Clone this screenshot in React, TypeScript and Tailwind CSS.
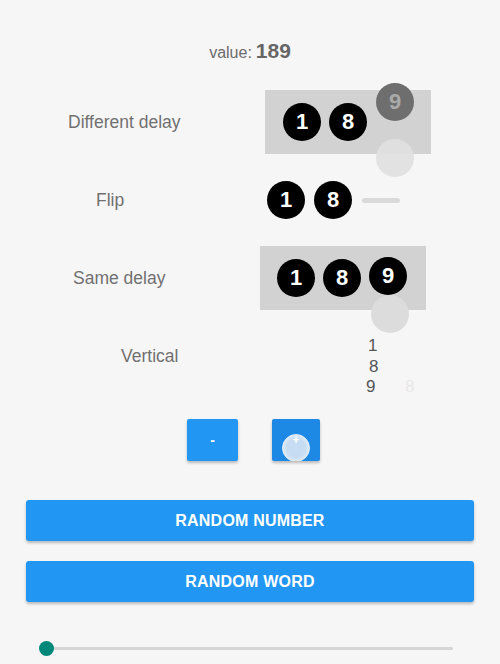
import React from "react";

const font = { fontFamily: '"Liberation Sans", Arial, sans-serif' };

function Ball({ d, className = "", textClass = "text-white" }: { d: string; className?: string; textClass?: string }) {
  return (
    <div className={`w-[38px] h-[38px] rounded-full flex items-center justify-center shrink-0 ${className}`}>
      <span className={`text-[22px] font-bold leading-none ${textClass}`} style={font}>{d}</span>
    </div>
  );
}

export default function App() {
  return (
    <div className="w-[500px] h-[664px] bg-[#f7f6f7] overflow-hidden flex flex-col" style={font}>
      <div className="h-[90px] flex-none flex items-start justify-center pt-[35px] text-[#6b6b6b]">
        <div className="flex items-baseline">
          <span className="text-[16px]">value: </span>
          <span className="text-[21px] font-bold ml-[4px] text-[#666]">189</span>
        </div>
      </div>

      {/* Different delay */}
      <div className="flex items-center h-[64px] flex-none">
        <span className="ml-[68px] text-[17.5px] text-[#707070] w-[197px]">Different delay</span>
        <div className="relative w-[166px] h-[64px] bg-[#d2d2d2] flex items-center pl-[18px] gap-[8px]">
          <Ball d="1" className="bg-black" />
          <Ball d="8" className="bg-black" />
          <div className="absolute left-[111px] top-[-7px]">
            <Ball d="9" className="bg-[#6e6e6e]" textClass="text-[#a9a9a9]" />
          </div>
          <div className="absolute left-[111px] top-[49px] w-[38px] h-[38px] rounded-full bg-[#e0e0e0] opacity-90" />
        </div>
      </div>

      {/* Flip */}
      <div className="flex items-center h-[38px] mt-[27px] flex-none">
        <span className="ml-[96px] text-[17.5px] text-[#707070] w-[171px]">Flip</span>
        <div className="flex items-center gap-[9px]">
          <Ball d="1" className="bg-black" />
          <Ball d="8" className="bg-black" />
          <div className="w-[38px] h-[5px] rounded-full bg-[#dadada] ml-[1px]" />
        </div>
      </div>

      {/* Same delay */}
      <div className="flex items-center h-[64px] mt-[27px] flex-none">
        <span className="ml-[73px] text-[17.5px] text-[#707070] w-[187px]">Same delay</span>
        <div className="relative w-[166px] h-[64px] bg-[#d2d2d2] flex items-center pl-[17px] gap-[8px]">
          <Ball d="1" className="bg-black" />
          <Ball d="8" className="bg-black" />
          <div className="relative top-[-2px]">
            <Ball d="9" className="bg-black" />
          </div>
          <div className="absolute left-[111px] top-[49px] w-[38px] h-[38px] rounded-full bg-[#dcdcdc]" />
        </div>
      </div>

      {/* Vertical */}
      <div className="flex items-start h-[62px] mt-[26px] flex-none">
        <span className="ml-[121px] mt-[7px] text-[17.5px] text-[#707070] w-[244px]">Vertical</span>
        <div className="relative flex flex-col text-[17px] leading-[20.5px] text-[#555]">
          <span className="ml-[3px]">1</span>
          <span className="ml-[4px]">8</span>
          <span className="ml-[1px]">9</span>
          <span className="absolute left-[40px] top-[41px] text-[#e8e8e8]">8</span>
        </div>
      </div>

      {/* +/- buttons */}
      <div className="flex flex-none items-center mt-[21px]">
        <div className="ml-[187px] w-[51px] h-[42px] bg-[#2196f3] rounded-[2px] shadow-[0_2px_3px_rgba(0,0,0,0.25)] flex items-center justify-center text-white font-bold text-[14px]">
          -
        </div>
        <div className="ml-[34px] relative w-[48px] h-[42px] bg-[#1e88e5] rounded-[2px] shadow-[0_2px_3px_rgba(0,0,0,0.25)] overflow-hidden">
          <div className="absolute left-[10px] top-[15px] w-[28px] h-[28px] rounded-full bg-[#c6dcf2] border border-[#e3eefa] shadow-[inset_0_0_4px_rgba(255,255,255,0.9)]" />
          <span className="absolute left-0 right-0 top-[15px] text-center text-white text-[12px] font-bold leading-none">+</span>
        </div>
      </div>

      {/* Random buttons */}
      <div className="mt-[39px] mx-[26px] h-[41px] bg-[#2196f3] rounded-[3px] shadow-[0_2px_3px_rgba(0,0,0,0.25)] flex items-center justify-center flex-none">
        <span className="text-white text-[16px] font-bold tracking-[0.2px]">RANDOM NUMBER</span>
      </div>
      <div className="mt-[20px] mx-[26px] h-[41px] bg-[#2196f3] rounded-[3px] shadow-[0_2px_3px_rgba(0,0,0,0.25)] flex items-center justify-center flex-none">
        <span className="text-white text-[16px] font-bold tracking-[0.2px]">RANDOM WORD</span>
      </div>

      {/* Slider */}
      <div className="mt-[39px] ml-[39px] w-[414px] relative h-[15px] flex items-center flex-none">
        <div className="absolute left-[7px] right-0 h-[3px] bg-[#d6d6d6] rounded-full" />
        <div className="relative w-[15px] h-[15px] rounded-full bg-[#00897b]" />
      </div>
    </div>
  );
}
